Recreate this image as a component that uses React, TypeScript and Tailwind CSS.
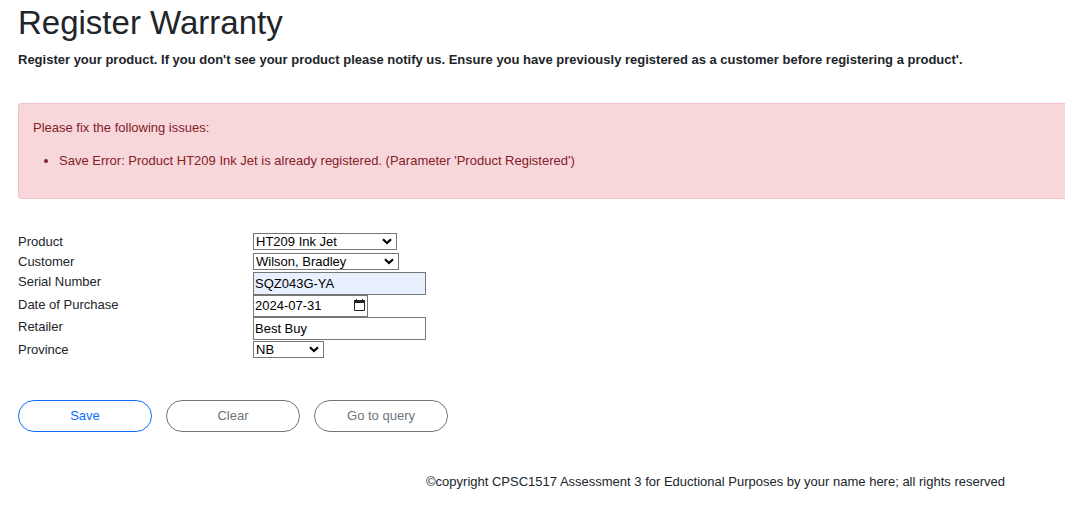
import type { ReactNode } from "react";

const inputClass = "h-[23px] w-[173px] border border-[#767676] px-px pb-px text-black";

function Row({ id, label, height, children }: { id: string; label: string; height: string; children: ReactNode }) {
  return (
    <div className={`flex items-start ${height}`}>
      <label htmlFor={id} className="w-[235px] shrink-0">{label}</label>
      {children}
    </div>
  );
}

function Select({ id, value, className }: { id: string; value: string; className: string }) {
  return (
    <div className={`relative mt-px h-[17px] ${className}`}>
      <select id={id} className="block h-full w-full appearance-none border border-[#767676] bg-white pl-0.5 pr-4 leading-[15px] text-black">
        <option>{value}</option>
      </select>
      <svg aria-hidden="true" viewBox="0 0 10 7" className="pointer-events-none absolute right-[5px] top-[5px] h-[7px] w-[10px]">
        <path d="M1 1.2 5 5 9 1.2" fill="none" stroke="#000" strokeWidth="2.2" />
      </svg>
    </div>
  );
}

export default function App() {
  return (
    <main className="overflow-hidden pl-[18px] pt-[5px] font-['Liberation_Sans',Arial,sans-serif] text-[13px] leading-5 text-[#212529]">
      <h1 className="text-[33px] leading-9">Register Warranty</h1>
      <p className="mt-[9px] font-bold">
        Register your product. If you don't see your product please notify us. Ensure you have previously registered as a customer before registering a product'.
      </p>
      <div role="alert" className="-mr-1 mt-[33px] rounded-[3px] border border-[#f5c2c7] bg-[#f7d7da] px-[14px] pb-[27px] pt-[14px] text-[#842029]">
        <p>Please fix the following issues:</p>
        <ul className="mt-[13px] list-disc pl-[26px]">
          <li>Save Error: Product HT209 Ink Jet is already registered. (Parameter 'Product Registered')</li>
        </ul>
      </div>
      <form className="mt-[33px]" onSubmit={(e) => e.preventDefault()}>
        <Row id="product" label="Product" height="h-5">
          <Select id="product" value="HT209 Ink Jet" className="w-36" />
        </Row>
        <Row id="customer" label="Customer" height="h-5">
          <Select id="customer" value="Wilson, Bradley" className="w-[146px]" />
        </Row>
        <Row id="serial" label="Serial Number" height="h-[23px]">
          <input id="serial" defaultValue="SQZ043G-YA" className={`${inputClass} bg-[#e8f0fe]`} />
        </Row>
        <Row id="date" label="Date of Purchase" height="h-[22px]">
          <div className="relative">
            <input id="date" defaultValue="2024-07-31" className="block h-[22px] w-[115px] border border-[#767676] pb-px pl-px pr-5 text-black" />
            <button type="button" aria-label="Open calendar" className="absolute right-[3px] top-1 text-[#222]">
              <svg aria-hidden="true" viewBox="0 0 11 12" className="block h-3 w-[11px]">
                <path d="M.5 2.5h10v9H.5z" fill="none" stroke="currentColor" />
                <path d="M0 1h2V0h1v1h5V0h1v1h2v3H0z" fill="currentColor" />
              </svg>
            </button>
          </div>
        </Row>
        <Row id="retailer" label="Retailer" height="h-[23px]">
          <input id="retailer" defaultValue="Best Buy" className={inputClass} />
        </Row>
        <Row id="province" label="Province" height="h-5">
          <Select id="province" value="NB" className="w-[71px]" />
        </Row>
        <div className="mt-10 flex gap-[14px]">
          <button className="h-8 w-[134px] rounded-full border border-[#0d6efd] text-[#0d6efd]">Save</button>
          <button type="button" className="h-8 w-[134px] rounded-full border border-[#6c757d] text-[#6c757d]">Clear</button>
          <button type="button" className="h-8 w-[134px] rounded-full border border-[#6c757d] text-[#6c757d]">Go to query</button>
        </div>
      </form>
      <footer className="mt-10 pr-[60px] text-right">©copyright CPSC1517 Assessment 3 for Eductional Purposes by your name here; all rights reserved</footer>
    </main>
  );
}
